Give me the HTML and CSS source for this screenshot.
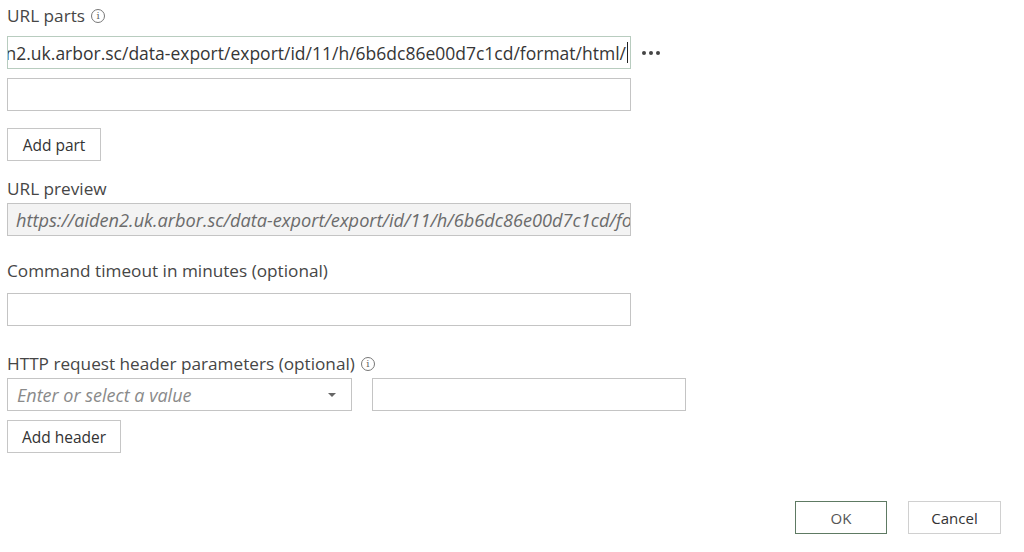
FILE: index.html
```html
<!DOCTYPE html>
<html>
<head>
<meta charset="utf-8">
<link rel="stylesheet" href="styles.css">
</head>
<body>
<div class="form">
  <div class="label lbl-parts">URL parts <span class="info">i</span></div>
  <div class="row">
    <div class="input focus"><div class="scroll"><span class="val">https://aiden2.uk.arbor.sc/data-export/export/id/11/h/6b6dc86e00d7c1cd/format/html/</span><span class="caret"></span></div></div>
    <div class="more"><span></span><span></span><span></span></div>
  </div>
  <div class="input second"></div>
  <button class="btn add-part">Add part</button>
  <div class="label lbl-preview">URL preview</div>
  <div class="input preview"><span class="pval">https://aiden2.uk.arbor.sc/data-export/export/id/11/h/6b6dc86e00d7c1cd/format/html/</span></div>
  <div class="label lbl-timeout">Command timeout in minutes (optional)</div>
  <div class="input timeout"></div>
  <div class="label lbl-http">HTTP request header parameters (optional) <span class="info">i</span></div>
  <div class="header-row">
    <div class="input select"><span class="ph">Enter or select a value</span><span class="arrow"></span></div>
    <div class="input hval"></div>
  </div>
  <button class="btn add-header">Add header</button>
  <div class="footer">
    <button class="btn ok">OK</button>
    <button class="btn cancel">Cancel</button>
  </div>
</div>
</body>
</html>
```
FILE: styles.css
```css
* { box-sizing: border-box; }
html, body { margin: 0; background: #fff; }
body {
  font-family: "Open Sans", "Noto Sans", sans-serif;
  font-size: 17.2px;
  color: #3a3a3a;
  width: 1024px;
  height: 552px;
  overflow: hidden;
}
.form { padding: 4px 0 0 7px; display: flex; flex-direction: column; align-items: flex-start; }
.label { line-height: 24px; color: #464646; display: flex; align-items: center; }
.info {
  display: inline-flex; align-items: center; justify-content: center;
  width: 14px; height: 14px; border: 1px solid #777; border-radius: 50%;
  font-size: 10px; line-height: 1; margin-left: 6px; color: #666; font-family: "DejaVu Serif", serif;
}
.lbl-parts { margin-bottom: 8px; }
.row { display: flex; align-items: center; }
.input {
  width: 624px; height: 33px; border: 1px solid #c4c4c4; background: #fff;
  display: flex; align-items: center; padding: 0 4px; overflow: hidden;
}
.input.focus { border-color: #b8ccbf; padding: 0 2px 0 0; }
.scroll { display: flex; justify-content: flex-end; width: 100%; white-space: nowrap; overflow: hidden; align-items: center; }
.val { flex: none; color: #363636; font-size: 17.5px; }
.caret { flex: none; width: 1px; height: 21px; background: #222; margin-left: 1px; }
.more { display: flex; gap: 3px; margin-left: 11px; }
.more span { width: 4px; height: 4px; border-radius: 50%; background: #444; }
.second { margin-top: 9px; }
.btn {
  font-family: inherit; font-size: 15.5px; color: #333; background: #fff;
  border: 1px solid #c6c6c6; height: 33px; padding: 0; cursor: default;
}
.add-part { width: 94px; margin-top: 17px; }
.lbl-preview { margin-top: 16px; }
.preview { margin-top: 2px; background: #f3f3f3; border-color: #c4c4c4; padding: 0 8px; white-space: nowrap; }
.pval { font-style: italic; color: #6b6b6b; font-size: 18.2px; }
.lbl-timeout { margin-top: 23px; }
.timeout { margin-top: 10px; }
.lbl-http { margin-top: 26px; }
.header-row { display: flex; gap: 20px; margin-top: 2px; }
.select { width: 345px; justify-content: space-between; padding: 0 15px 0 9px; }
.ph { font-style: italic; color: #8a8a8a; font-size: 18px; }
.arrow { width: 0; height: 0; border-left: 4px solid transparent; border-right: 4px solid transparent; border-top: 4px solid #666; }
.hval { width: 314px; }
.add-header { width: 114px; margin-top: 9px; }
.footer { align-self: stretch; display: flex; justify-content: flex-end; gap: 21px; margin-top: 48px; padding-right: 23px; }
.ok { width: 92px; border-color: #5e7a63; color: #555; font-size: 15px; }
.cancel { width: 93px; border-color: #d0d0d0; font-size: 15px; }
```
